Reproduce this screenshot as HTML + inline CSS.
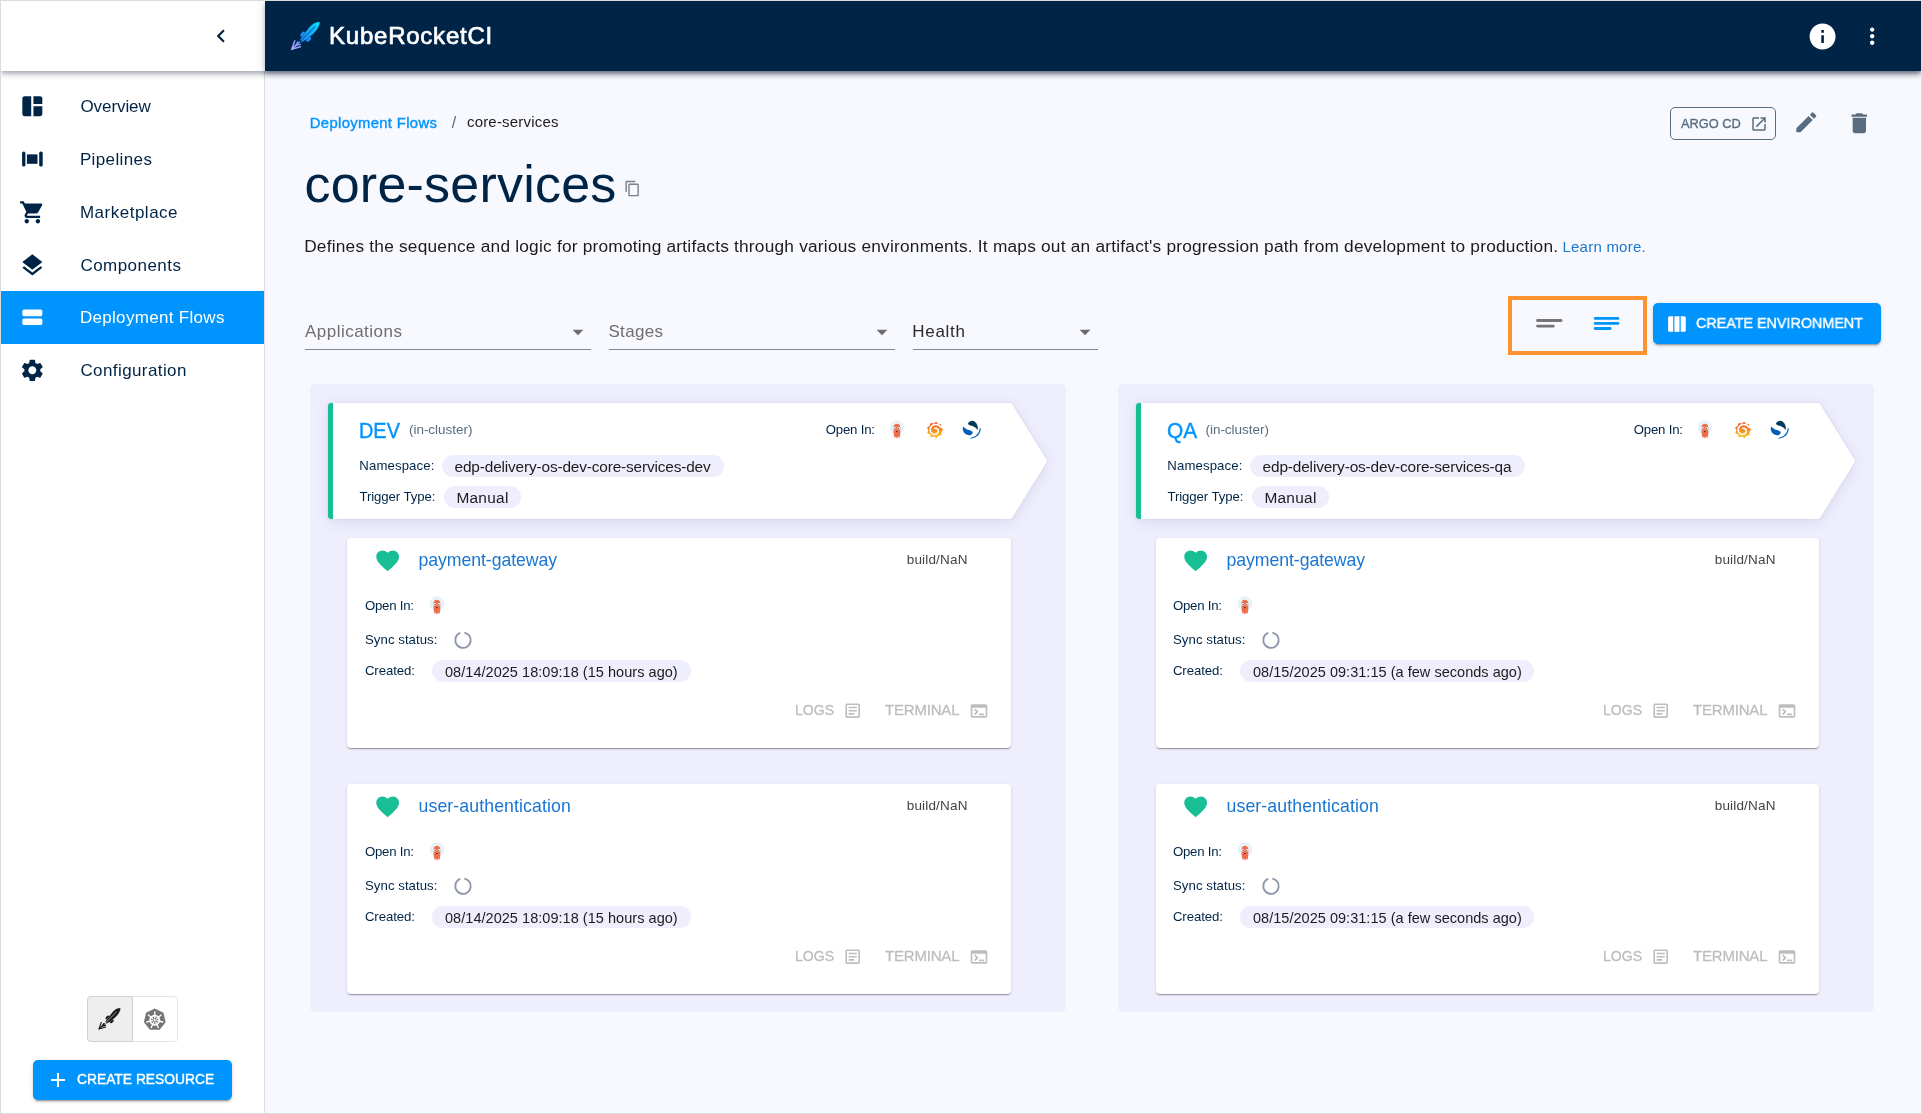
<!DOCTYPE html>
<html lang="en"><head><meta charset="utf-8"><title>core-services - Deployment Flows - KubeRocketCI</title>
<style>
html,body{margin:0;padding:0}
body{width:1922px;height:1114px;position:relative;overflow:hidden;background:#f8f9fe;font-family:"Liberation Sans",Arial,sans-serif}
.t{position:absolute;white-space:nowrap;line-height:normal;display:block}
.b{position:absolute;display:block}
#root{position:absolute;left:0;top:0;width:1922px;height:1114px;will-change:transform}
#frame{position:absolute;left:0;top:0;width:1920px;height:1112px;border:1px solid #dcdcdc;z-index:20;pointer-events:none}
</style></head><body>
<div id="root">
<div class="b" style="left:1px;top:1px;width:1920px;height:70px;background:#fff;box-shadow:0 2px 4px -1px rgba(0,20,50,.22),0 4px 5px 0 rgba(0,20,50,.15),0 1px 10px 0 rgba(0,20,50,.13);z-index:5"></div>
<div class="b" style="left:265px;top:1px;width:1656px;height:70px;background:#002446;z-index:6;box-shadow:0 2px 4px -1px rgba(0,20,50,.22),0 4px 5px 0 rgba(0,20,50,.15),0 1px 10px 0 rgba(0,20,50,.13)"></div>
<div style="position:absolute;left:0;top:0;z-index:7">
<svg class="b" style="left:208.30px;top:23.20px" width="26" height="26" viewBox="0 0 24 24" fill="#002446"><path d="M15.41 7.41L14 6l-6 6 6 6 1.41-1.41L10.83 12z"/></svg>
<svg class="b" style="left:284.00px;top:14.00px" width="48.00" height="44.00" viewBox="0 0 48 44"><defs><linearGradient id="rkb" gradientUnits="userSpaceOnUse" x1="35.800" y1="7.900" x2="16.500" y2="27"><stop offset="0" stop-color="#00e1ff"/><stop offset=".45" stop-color="#0fb4ff"/><stop offset="1" stop-color="#1e8bff"/></linearGradient><linearGradient id="rkf" gradientUnits="userSpaceOnUse" x1="17" y1="27" x2="7.500" y2="35.600"><stop offset="0" stop-color="#5a9cff"/><stop offset="1" stop-color="#c4a6ff"/></linearGradient></defs><ellipse cx="18.800" cy="20.100" rx="3" ry="1.700" transform="rotate(-45 18.800 20.100)" fill="#1b93ff"/><ellipse cx="24.600" cy="25.300" rx="3" ry="1.700" transform="rotate(-45 24.600 25.300)" fill="#1b93ff"/><path d="M35.90 7.80C32.20 7.50 28.30 9.60 25.20 13.30L16.00 25.40L17.50 28.40L22.20 25.80C27.00 22.20 31.00 18.80 33.10 15.60C35.10 12.60 36.00 9.90 35.90 7.80z" fill="url(#rkb)" stroke="#002446" stroke-width=".350"/><path d="M31 12.500L16.700 27" stroke="#043366" stroke-width=".900" fill="none"/><g fill="none" stroke="url(#rkf)" stroke-width="1.500" stroke-linejoin="miter" stroke-linecap="butt"><path d="M10.900 26.300L7.900 35.200l9.200-2.700"/><path d="M14.100 27.600l-2.300 4 5.200-1.500"/><path d="M15.800 27.800L8.500 34.700"/></g></svg>
<span class="t " style="left:329.03px;top:22.00px;font-size:24px;color:#fff;letter-spacing:0.767px;-webkit-text-stroke:0.7px #fff;">KubeRocketCI</span>
<svg class="b" style="left:1806.70px;top:20.70px" width="31.2" height="31.2" viewBox="0 0 24 24" fill="#fff"><path d="M12 2C6.48 2 2 6.48 2 12s4.48 10 10 10 10-4.48 10-10S17.52 2 12 2zm1 15h-2v-6h2v6zm0-8h-2V7h2v2z"/></svg>
<svg class="b" style="left:1859.00px;top:23.10px" width="26.4" height="26.4" viewBox="0 0 24 24" fill="#fff"><path d="M12 8c1.1 0 2-.9 2-2s-.9-2-2-2-2 .9-2 2 .9 2 2 2zm0 2c-1.1 0-2 .9-2 2s.9 2 2 2 2-.9 2-2-.9-2-2-2zm0 6c-1.1 0-2 .9-2 2s.9 2 2 2 2-.9 2-2-.9-2-2-2z"/></svg>
</div>
<div class="b" style="left:1px;top:71px;width:263px;height:1042px;background:#fff;border-right:1px solid #dedede"></div>
<div class="b" style="left:1px;top:290.8px;width:263px;height:52.9px;background:#0094ff"></div>
<svg class="b" style="left:18.66px;top:92.66px" width="26.67" height="26.67" viewBox="0 0 24 24" fill="#002446"><path d="M11 21H5c-1.1 0-2-.9-2-2V5c0-1.1.9-2 2-2h6v18zm2 0h6c1.1 0 2-.9 2-2v-7h-8v9zm8-11V5c0-1.1-.9-2-2-2h-6v7h8z"/></svg>
<span class="t " style="left:80.49px;top:97.00px;font-size:17px;color:#002446;letter-spacing:-0.084px;">Overview</span>
<span class="t " style="left:79.91px;top:150.00px;font-size:17px;color:#002446;letter-spacing:0.377px;">Pipelines</span>
<svg class="b" style="left:18.66px;top:198.66px" width="26.67" height="26.67" viewBox="0 0 24 24" fill="#002446"><path d="M7 18c-1.1 0-1.99.9-1.99 2S5.9 22 7 22s2-.9 2-2-.9-2-2-2zM1 2v2h2l3.6 7.59-1.35 2.45c-.16.28-.25.61-.25.96 0 1.1.9 2 2 2h12v-2H7.42c-.14 0-.25-.11-.25-.25l.03-.12.9-1.63h7.45c.75 0 1.41-.41 1.75-1.03l3.58-6.49c.08-.14.12-.31.12-.48 0-.55-.45-1-1-1H5.21l-.94-2H1zm16 16c-1.1 0-1.99.9-1.99 2s.89 2 1.99 2 2-.9 2-2-.9-2-2-2z"/></svg>
<span class="t " style="left:79.91px;top:203.00px;font-size:17px;color:#002446;letter-spacing:0.505px;">Marketplace</span>
<svg class="b" style="left:18.66px;top:251.66px" width="26.67" height="26.67" viewBox="0 0 24 24" fill="#002446"><path d="M11.99 18.54l-7.37-5.73L3 14.07l9 7 9-7-1.63-1.27-7.38 5.74zM12 16l7.36-5.73L21 9l-9-7-9 7 1.63 1.27L12 16z"/></svg>
<span class="t " style="left:80.44px;top:256.00px;font-size:17px;color:#002446;letter-spacing:0.454px;">Components</span>
<span class="t " style="left:79.91px;top:308.00px;font-size:17px;color:#fff;letter-spacing:0.312px;">Deployment Flows</span>
<svg class="b" style="left:18.66px;top:356.67px" width="26.67" height="26.67" viewBox="0 0 24 24" fill="#002446"><path d="M19.14 12.94c.04-.3.06-.61.06-.94 0-.32-.02-.64-.07-.94l2.03-1.58c.18-.14.23-.41.12-.61l-1.92-3.32c-.12-.22-.37-.29-.59-.22l-2.39.96c-.5-.38-1.03-.7-1.62-.94l-.36-2.54c-.04-.24-.24-.41-.48-.41h-3.84c-.24 0-.43.17-.47.41l-.36 2.54c-.59.24-1.13.57-1.62.94l-2.39-.96c-.22-.08-.47 0-.59.22L2.74 8.87c-.12.21-.08.47.12.61l2.03 1.58c-.05.3-.09.63-.09.94s.02.64.07.94l-2.03 1.58c-.18.14-.23.41-.12.61l1.92 3.32c.12.22.37.29.59.22l2.39-.96c.5.38 1.03.7 1.62.94l.36 2.54c.05.24.24.41.48.41h3.84c.24 0 .44-.17.47-.41l.36-2.54c.59-.24 1.13-.56 1.62-.94l2.39.96c.22.08.47 0 .59-.22l1.92-3.32c.12-.22.07-.47-.12-.61l-2.01-1.58zM12 15.6c-1.98 0-3.6-1.62-3.6-3.6s1.62-3.6 3.6-3.6 3.6 1.62 3.6 3.6-1.62 3.6-3.6 3.6z"/></svg>
<span class="t " style="left:80.44px;top:361.00px;font-size:17px;color:#002446;letter-spacing:0.404px;">Configuration</span>
<svg class="b" style="left:20px;top:148px" width="26" height="22" viewBox="0 0 26 22" fill="#002446"><rect x="2.100" y="3.600" width="3.300" height="15" rx="1.600"/><rect x="6.900" y="6.400" width="10.600" height="9.400"/><rect x="19.200" y="3.600" width="3.500" height="15" rx="1.600"/></svg>
<svg class="b" style="left:18.66px;top:303.97px" width="26.67" height="26.67" viewBox="0 0 24 24" fill="#fff"><rect x="3" y="5" width="18" height="6" rx="1.500"/><rect x="3" y="13" width="18" height="6" rx="1.500"/></svg>
<div class="b" style="left:87px;top:996px;width:91px;height:46px;border:1px solid #e4e4e4;border-radius:4px;box-sizing:border-box;background:#fff"></div>
<div class="b" style="left:87px;top:996px;width:46px;height:46px;background:#eeeeee;border:1px solid #d2d2d2;border-radius:4px 0 0 4px;box-sizing:border-box"></div>
<svg class="b" style="left:93.25px;top:1002.40px" width="36.82" height="33.75" viewBox="0 0 48 44"><ellipse cx="18.800" cy="20.100" rx="3" ry="1.700" transform="rotate(-45 18.800 20.100)" fill="#161616"/><ellipse cx="24.600" cy="25.300" rx="3" ry="1.700" transform="rotate(-45 24.600 25.300)" fill="#161616"/><path d="M35.90 7.80C32.20 7.50 28.30 9.60 25.20 13.30L16.00 25.40L17.50 28.40L22.20 25.80C27.00 22.20 31.00 18.80 33.10 15.60C35.10 12.60 36.00 9.90 35.90 7.80z" fill="#161616" stroke="#ededed" stroke-width=".350"/><path d="M31 12.500L16.700 27" stroke="#ededed" stroke-width=".900" fill="none"/><g fill="none" stroke="#161616" stroke-width="1.500" stroke-linejoin="miter" stroke-linecap="butt"><path d="M10.900 26.300L7.900 35.200l9.200-2.700"/><path d="M14.100 27.600l-2.300 4 5.200-1.500"/><path d="M15.800 27.800L8.500 34.700"/></g></svg>
<svg class="b" style="left:141.85px;top:1006.70px" width="25.5" height="25.5" viewBox="0 0 24 24" fill="none"><path fill="#757575" d="M12 1.500l8.200 3.950 2.030 8.870-5.680 7.120H7.450L1.770 14.320 3.800 5.450z"/>
<g stroke="#fff" fill="none" stroke-linecap="round"><circle cx="12" cy="12.400" r="4.300" stroke-width="1.700"/><path stroke-width="1.250" d="M12.00 10.20L12.00 4.70M13.72 11.03L18.02 7.60M14.14 12.89L19.51 14.11M12.95 14.38L15.34 19.34M11.05 14.38L8.66 19.34M9.86 12.89L4.49 14.11M10.28 11.03L5.98 7.60"/></g><circle cx="12" cy="12.400" r="1" fill="#fff"/></svg>
<div class="b" style="left:33px;top:1060px;width:199px;height:40px;background:#0094ff;border-radius:5px;box-shadow:0 3px 1px -2px rgba(0,0,0,.2),0 2px 2px 0 rgba(0,0,0,.14),0 1px 5px 0 rgba(0,0,0,.12)"></div>
<svg class="b" style="left:46.00px;top:1068.00px" width="24" height="24" viewBox="0 0 24 24" fill="#fff"><path d="M19 13h-6v6h-2v-6H5v-2h6V5h2v6h6v2z"/></svg>
<span class="t " style="left:77.10px;top:1071.00px;font-size:14.9px;color:#fff;transform:scaleX(0.9282);transform-origin:0 0;-webkit-text-stroke:0.4px #fff;">CREATE RESOURCE</span>
<span class="t " style="left:309.79px;top:115.00px;font-size:14.8px;color:#0094ff;letter-spacing:0.361px;-webkit-text-stroke:0.4px #0094ff;">Deployment Flows</span>
<span class="t " style="left:451.80px;top:114.00px;font-size:16px;color:#5f6b78;">/</span>
<span class="t " style="left:466.96px;top:113.00px;font-size:15px;color:#1c1c1c;letter-spacing:0.191px;">core-services</span>
<span class="t " style="left:304.49px;top:154.00px;font-size:52px;color:#002446;letter-spacing:0.225px;">core-services</span>
<svg class="b" style="left:623.70px;top:179.90px" width="17" height="17" viewBox="0 0 24 24" fill="#7e7e86"><path d="M16 1H4c-1.1 0-2 .9-2 2v14h2V3h12V1zm3 4H8c-1.1 0-2 .9-2 2v14c0 1.1.9 2 2 2h11c1.1 0 2-.9 2-2V7c0-1.1-.9-2-2-2zm0 16H8V7h11v14z"/></svg>
<span class="t " style="left:304.18px;top:236.00px;font-size:17.3px;color:#1c1c1c;letter-spacing:0.218px;">Defines the sequence and logic for promoting artifacts through various environments. It maps out an artifact's progression path from development to production.</span>
<span class="t " style="left:1562.47px;top:238.00px;font-size:15px;color:#1976d2;letter-spacing:0.232px;">Learn more.</span>
<div class="b" style="left:1670px;top:107px;width:106px;height:33px;border:1px solid #596d80;border-radius:5px;box-sizing:border-box"></div>
<span class="t " style="left:1680.97px;top:116.00px;font-size:13.7px;color:#596d80;transform:scaleX(0.9375);transform-origin:0 0;-webkit-text-stroke:0.35px #596d80;">ARGO CD</span>
<svg class="b" style="left:1750.10px;top:114.60px" width="18" height="18" viewBox="0 0 24 24" fill="#596d80"><path d="M19 19H5V5h7V3H5c-1.11 0-2 .9-2 2v14c0 1.1.89 2 2 2h14c1.1 0 2-.9 2-2v-7h-2v7zM14 3v2h3.59l-9.83 9.83 1.41 1.41L19 6.41V10h2V3h-7z"/></svg>
<svg class="b" style="left:1793.46px;top:109.47px" width="26.67" height="26.67" viewBox="0 0 24 24" fill="#596d80"><path d="M3 17.25V21h3.75L17.81 9.94l-3.75-3.75L3 17.25zM20.71 7.04c.39-.39.39-1.02 0-1.41l-2.34-2.34c-.39-.39-1.02-.39-1.41 0l-1.83 1.83 3.75 3.75 1.83-1.83z"/></svg>
<svg class="b" style="left:1845.91px;top:109.66px" width="26.67" height="26.67" viewBox="0 0 24 24" fill="#596d80"><path d="M6 19c0 1.1.9 2 2 2h8c1.1 0 2-.9 2-2V7H6v12zM19 4h-3.5l-1-1h-5l-1 1H5v2h14V4z"/></svg>
<span class="t " style="left:305.07px;top:322.00px;font-size:17px;color:#6e6e6e;letter-spacing:0.471px;">Applications</span>
<div class="b" style="left:305px;top:349px;width:286px;height:1px;background:#85858c"></div>
<svg class="b" style="left:565.30px;top:319.10px" width="26" height="26" viewBox="0 0 24 24" fill="#6b6b6b"><path d="M7 10l5 5 5-5z"/></svg>
<span class="t " style="left:608.43px;top:322.00px;font-size:17px;color:#6e6e6e;letter-spacing:0.332px;">Stages</span>
<div class="b" style="left:609px;top:349px;width:286px;height:1px;background:#85858c"></div>
<svg class="b" style="left:869.30px;top:319.10px" width="26" height="26" viewBox="0 0 24 24" fill="#6b6b6b"><path d="M7 10l5 5 5-5z"/></svg>
<span class="t " style="left:912.31px;top:322.00px;font-size:17px;color:#2b2b2b;letter-spacing:0.711px;">Health</span>
<div class="b" style="left:913px;top:349px;width:185px;height:1px;background:#85858c"></div>
<svg class="b" style="left:1072.30px;top:319.10px" width="26" height="26" viewBox="0 0 24 24" fill="#6b6b6b"><path d="M7 10l5 5 5-5z"/></svg>
<div class="b" style="left:1508px;top:296px;width:139px;height:59px;border:4px solid #fd9330;box-sizing:border-box"></div>
<svg class="b" style="left:1530px;top:310px" width="100" height="26" viewBox="0 0 100 26"><g fill="#757575"><rect x="6.100" y="9.100" width="26.400" height="2.800" rx="1.400"/><rect x="6.100" y="14.700" width="18.600" height="2.700" rx="1.350"/></g><g fill="#0094ff"><rect x="63.750" y="7" width="25.600" height="2.800" rx="1.400"/><rect x="63.750" y="12.050" width="25.600" height="2.800" rx="1.400"/><rect x="63.750" y="17.100" width="17.800" height="2.800" rx="1.400"/></g></svg>
<div class="b" style="left:1653px;top:303px;width:228px;height:41px;background:#0094ff;border-radius:5px;box-shadow:0 3px 1px -2px rgba(0,0,0,.2),0 2px 2px 0 rgba(0,0,0,.14),0 1px 5px 0 rgba(0,0,0,.12)"></div>
<svg class="b" style="left:1666px;top:314px" width="22" height="20" viewBox="0 0 22 20" fill="#fff"><path d="M3.600 2.300h3.600v15.500H3.600a1.500 1.500 0 0 1-1.500-1.500V3.800a1.500 1.500 0 0 1 1.500-1.500z"/><rect x="8.400" y="2.300" width="5.100" height="15.500"/><path d="M14.700 2.300h3.600a1.500 1.500 0 0 1 1.500 1.500v12.500a1.500 1.500 0 0 1-1.500 1.500h-3.600z"/></svg>
<span class="t " style="left:1696.27px;top:315.00px;font-size:14.9px;color:#fff;transform:scaleX(0.9625);transform-origin:0 0;-webkit-text-stroke:0.4px #fff;">CREATE ENVIRONMENT</span>
<div class="b" style="left:310px;top:384px;width:756px;height:627.7px;background:#efeefd;border-radius:5px"></div>
<svg class="b" style="left:318px;top:393px;filter:drop-shadow(0 0 1px rgba(20,30,90,.10)) drop-shadow(0 3px 7px rgba(30,45,130,.10))" width="745" height="137" viewBox="0 0 745 137"><path d="M13 10H691.500q2 0 3 1.700L728.300 66.300q1 1.700 0 3.400L694.500 124.300q-1 1.700-3 1.700H13q-3 0-3-3V13q0-3 3-3z" fill="#fff"/><path d="M13 10h2v116h-2q-3 0-3-3V13q0-3 3-3z" fill="#18be94"/></svg>
<span class="t " style="left:358.77px;top:419.00px;font-size:21.4px;color:#0094ff;transform:scaleX(0.9299);transform-origin:0 0;-webkit-text-stroke:0.4px #0094ff;">DEV</span>
<span class="t " style="left:408.96px;top:422.00px;font-size:13.5px;color:#596d80;letter-spacing:-0.026px;">(in-cluster)</span>
<span class="t " style="left:825.77px;top:422.00px;font-size:13.2px;color:#002446;letter-spacing:-0.201px;">Open In:</span>
<svg class="b" style="left:885.10px;top:418.20px" width="24" height="24" viewBox="0 0 24 24" fill="none"><circle cx="11.900" cy="9.500" r="6.600" fill="#eaf5fb" stroke="#c9e2f1" stroke-width=".600"/>
<path d="M8.500 9.300c0-2.100 1.500-3.500 3.400-3.500s3.400 1.400 3.400 3.500v6.300c0 .5-.1 1-.3 1.400l-.5 3.100-1-1.700-.6 2.400-.9-2.200-.9 2.200-.6-2.400-1 1.700-.5-3.100c-.2-.4-.3-.9-.3-1.400z" fill="#ee6d4b"/>
<circle cx="9.900" cy="10.200" r="1.250" fill="#fff"/><circle cx="13.900" cy="10.200" r="1.250" fill="#fff"/><circle cx="10.100" cy="10.300" r=".600" fill="#2a2a2a"/><circle cx="13.700" cy="10.300" r=".600" fill="#2a2a2a"/>
<ellipse cx="11.800" cy="13.600" rx=".850" ry=".700" fill="#3a1f1a"/></svg>
<svg class="b" style="left:923.80px;top:419.30px" width="22" height="22" viewBox="0 0 24 24" fill="none"><defs><linearGradient id="gg" x1="0" y1="1" x2="0" y2="0"><stop offset="0" stop-color="#fcc419"/><stop offset=".5" stop-color="#f78d1e"/><stop offset="1" stop-color="#ee4a24"/></linearGradient></defs>
<path fill="url(#gg)" stroke="url(#gg)" stroke-width=".600" stroke-linejoin="round" d="M13.30 3.40L15.35 5.85L18.53 6.25L18.52 9.45L20.70 11.79L18.63 14.23L18.80 17.43L15.65 17.97L13.72 20.53L10.95 18.92L7.84 19.64L6.75 16.63L3.90 15.18L5.00 12.17L3.75 9.23L6.53 7.63L7.47 4.57L10.62 5.14z"/>
<path d="M11.76 10.35L12.06 10.20L12.40 10.11L12.77 10.07L13.15 10.09L13.54 10.17L13.92 10.32L14.29 10.54L14.63 10.82L14.93 11.16L15.18 11.56L15.38 12.00L15.50 12.49L15.55 13.00L15.51 13.53L15.40 14.06L15.19 14.58L14.90 15.07L14.53 15.53L14.08 15.93L13.56 16.27L12.98 16.53L12.36 16.70L11.70 16.77L11.02 16.74L10.34 16.61L9.68 16.37L9.04 16.02L8.46 15.57L7.94 15.02L7.50 14.39L7.16 13.69L6.93 12.93L6.81 12.12L6.81 11.29L6.95 10.46L7.21 9.65L7.60 8.87L8.11 8.15L8.74 7.50L9.47 6.94L10.29 6.50L11.18 6.18L12.13 6.00L13.10 5.96L14.09 6.08L15.06 6.34L15.99 6.76L16.87 7.32L17.65 8.01L18.34 8.83" fill="none" stroke="#fff" stroke-width="1.800" stroke-linecap="round"/></svg>
<svg class="b" style="left:960.00px;top:418.00px" width="24" height="24" viewBox="0 0 24 24" fill="none"><path fill="#003b5c" d="M8 5.600C8.300 4.200 9.600 3.200 11.500 2.900c2.500-.300 4.700 1.600 5.700 4.100.700 1.800.800 3.800.300 5.300-.500-1.300-1.200-2.100-2.300-2.900-1.600-1.100-3.600-1.600-5.300-2.100C8.800 7 8 6.400 8 5.600z"/>
<path fill="#005eb8" d="M3.200 8.600c-.600 1.400-.600 3 0 4.400 1 2.400 3.200 4 5.800 4.200 1.600.100 3-.600 3.600-2 .300-.900-.100-1.700-1-2.200-1.600-.700-3.600-1-5.400-2-1.300-.700-2.300-1.500-3-2.400z"/>
<path fill="#005eb8" d="M20.600 9.800c.300 2.200-.200 4.400-1.600 6.400-2 2.800-5.500 4.400-9.100 4.400l.300-.700c3-.500 5.800-1.900 7.600-4.400 1.200-1.700 1.800-3.600 1.950-5.500z"/></svg>
<span class="t " style="left:359.32px;top:458.00px;font-size:13.2px;color:#002446;letter-spacing:0.109px;">Namespace:</span>
<div class="b" style="left:442px;top:455px;width:282.2px;height:22px;background:#efeefd;border-radius:11.0px"></div>
<span class="t " style="left:454.55px;top:458.00px;font-size:15.4px;color:#1c1c1c;letter-spacing:-0.155px;">edp-delivery-os-dev-core-services-dev</span>
<span class="t " style="left:359.40px;top:489.00px;font-size:13.2px;color:#002446;letter-spacing:-0.070px;">Trigger Type:</span>
<div class="b" style="left:444px;top:486px;width:77px;height:22px;background:#efeefd;border-radius:11.0px"></div>
<span class="t " style="left:456.44px;top:489.00px;font-size:15.4px;color:#1c1c1c;letter-spacing:0.277px;">Manual</span>
<div class="b" style="left:347px;top:538px;width:664px;height:210px;background:#fff;border-radius:4px;box-shadow:0 2px 1px -1px rgba(0,0,0,.2),0 1px 1px 0 rgba(0,0,0,.14),0 1px 3px 0 rgba(0,0,0,.12)"></div>
<svg class="b" style="left:374.15px;top:546.95px" width="27.3" height="27.3" viewBox="0 0 24 24" fill="#18be94"><path d="M12 21.35l-1.45-1.32C5.4 15.36 2 12.28 2 8.5 2 5.42 4.42 3 7.5 3c1.74 0 3.41.81 4.5 2.09C13.09 3.81 14.76 3 16.5 3 19.58 3 22 5.42 22 8.5c0 3.78-3.4 6.86-8.55 11.54L12 21.35z"/></svg>
<span class="t " style="left:418.56px;top:550.00px;font-size:17.7px;color:#1976d2;letter-spacing:-0.074px;">payment-gateway</span>
<span class="t " style="left:906.73px;top:552.00px;font-size:13.5px;color:#444;letter-spacing:0.174px;">build/NaN</span>
<span class="t " style="left:364.97px;top:598.00px;font-size:13.2px;color:#002446;letter-spacing:-0.229px;">Open In:</span>
<svg class="b" style="left:425.20px;top:593.80px" width="24" height="24" viewBox="0 0 24 24" fill="none"><circle cx="11.900" cy="9.500" r="6.600" fill="#eaf5fb" stroke="#c9e2f1" stroke-width=".600"/>
<path d="M8.500 9.300c0-2.100 1.500-3.500 3.400-3.500s3.400 1.400 3.400 3.500v6.300c0 .5-.1 1-.3 1.400l-.5 3.100-1-1.700-.6 2.400-.9-2.200-.9 2.200-.6-2.400-1 1.700-.5-3.100c-.2-.4-.3-.9-.3-1.400z" fill="#ee6d4b"/>
<circle cx="9.900" cy="10.200" r="1.250" fill="#fff"/><circle cx="13.900" cy="10.200" r="1.250" fill="#fff"/><circle cx="10.100" cy="10.300" r=".600" fill="#2a2a2a"/><circle cx="13.700" cy="10.300" r=".600" fill="#2a2a2a"/>
<ellipse cx="11.800" cy="13.600" rx=".850" ry=".700" fill="#3a1f1a"/></svg>
<span class="t " style="left:365.00px;top:632.00px;font-size:13.2px;color:#002446;letter-spacing:0.055px;">Sync status:</span>
<svg class="b" style="left:453px;top:630px" width="20" height="20" viewBox="0 0 20 20"><circle cx="10" cy="10.200" r="7.700" fill="none" stroke="#8f97aa" stroke-width="1.900" stroke-dasharray="44 4.400" transform="rotate(-80 10 10.200)"/></svg>
<span class="t " style="left:364.93px;top:663.00px;font-size:13.2px;color:#002446;letter-spacing:-0.079px;">Created:</span>
<div class="b" style="left:432px;top:660px;width:258.5px;height:22px;background:#efeefd;border-radius:11.0px"></div>
<span class="t " style="left:445.03px;top:664.00px;font-size:14.5px;color:#1c1c1c;letter-spacing:0.039px;">08/14/2025 18:09:18 (15 hours ago)</span>
<span class="t " style="left:795.44px;top:701.00px;font-size:15px;color:#bdbdbd;transform:scaleX(0.9406);transform-origin:0 0;-webkit-text-stroke:0.3px #bdbdbd;">LOGS</span>
<svg class="b" style="left:843.20px;top:700.90px" width="19.4" height="19.4" viewBox="0 0 24 24" fill="#bdbdbd"><path d="M19 5v14H5V5h14m0-2H5c-1.1 0-2 .9-2 2v14c0 1.1.9 2 2 2h14c1.1 0 2-.9 2-2V5c0-1.1-.9-2-2-2zM14 17H7v-2h7v2zm3-4H7v-2h10v2zm0-4H7V7h10v2z"/></svg>
<span class="t " style="left:885.06px;top:701.00px;font-size:15px;color:#bdbdbd;letter-spacing:-0.201px;-webkit-text-stroke:0.3px #bdbdbd;">TERMINAL</span>
<svg class="b" style="left:969.20px;top:700.60px" width="20" height="20" viewBox="0 0 24 24" fill="#bdbdbd"><path d="M20 4H4c-1.11 0-2 .9-2 2v12c0 1.1.89 2 2 2h16c1.1 0 2-.9 2-2V6c0-1.1-.9-2-2-2zm0 14H4V8h16v10zm-2-1h-6v-2h6v2zM7.5 17l-1.41-1.41L8.67 13l-2.59-2.59L7.5 9l4 4-4 4z"/></svg>
<div class="b" style="left:347px;top:784px;width:664px;height:210px;background:#fff;border-radius:4px;box-shadow:0 2px 1px -1px rgba(0,0,0,.2),0 1px 1px 0 rgba(0,0,0,.14),0 1px 3px 0 rgba(0,0,0,.12)"></div>
<svg class="b" style="left:374.15px;top:792.95px" width="27.3" height="27.3" viewBox="0 0 24 24" fill="#18be94"><path d="M12 21.35l-1.45-1.32C5.4 15.36 2 12.28 2 8.5 2 5.42 4.42 3 7.5 3c1.74 0 3.41.81 4.5 2.09C13.09 3.81 14.76 3 16.5 3 19.58 3 22 5.42 22 8.5c0 3.78-3.4 6.86-8.55 11.54L12 21.35z"/></svg>
<span class="t " style="left:418.55px;top:796.00px;font-size:17.7px;color:#1976d2;letter-spacing:0.097px;">user-authentication</span>
<span class="t " style="left:906.73px;top:798.00px;font-size:13.5px;color:#444;letter-spacing:0.174px;">build/NaN</span>
<span class="t " style="left:364.97px;top:844.00px;font-size:13.2px;color:#002446;letter-spacing:-0.229px;">Open In:</span>
<svg class="b" style="left:425.20px;top:839.80px" width="24" height="24" viewBox="0 0 24 24" fill="none"><circle cx="11.900" cy="9.500" r="6.600" fill="#eaf5fb" stroke="#c9e2f1" stroke-width=".600"/>
<path d="M8.500 9.300c0-2.100 1.500-3.500 3.400-3.500s3.400 1.400 3.400 3.500v6.300c0 .5-.1 1-.3 1.400l-.5 3.100-1-1.700-.6 2.400-.9-2.200-.9 2.200-.6-2.400-1 1.700-.5-3.100c-.2-.4-.3-.9-.3-1.400z" fill="#ee6d4b"/>
<circle cx="9.900" cy="10.200" r="1.250" fill="#fff"/><circle cx="13.900" cy="10.200" r="1.250" fill="#fff"/><circle cx="10.100" cy="10.300" r=".600" fill="#2a2a2a"/><circle cx="13.700" cy="10.300" r=".600" fill="#2a2a2a"/>
<ellipse cx="11.800" cy="13.600" rx=".850" ry=".700" fill="#3a1f1a"/></svg>
<span class="t " style="left:365.00px;top:878.00px;font-size:13.2px;color:#002446;letter-spacing:0.055px;">Sync status:</span>
<svg class="b" style="left:453px;top:876px" width="20" height="20" viewBox="0 0 20 20"><circle cx="10" cy="10.200" r="7.700" fill="none" stroke="#8f97aa" stroke-width="1.900" stroke-dasharray="44 4.400" transform="rotate(-80 10 10.200)"/></svg>
<span class="t " style="left:364.93px;top:909.00px;font-size:13.2px;color:#002446;letter-spacing:-0.079px;">Created:</span>
<div class="b" style="left:432px;top:906px;width:258.5px;height:22px;background:#efeefd;border-radius:11.0px"></div>
<span class="t " style="left:445.03px;top:910.00px;font-size:14.5px;color:#1c1c1c;letter-spacing:0.039px;">08/14/2025 18:09:18 (15 hours ago)</span>
<span class="t " style="left:795.44px;top:947.00px;font-size:15px;color:#bdbdbd;transform:scaleX(0.9406);transform-origin:0 0;-webkit-text-stroke:0.3px #bdbdbd;">LOGS</span>
<svg class="b" style="left:843.20px;top:946.90px" width="19.4" height="19.4" viewBox="0 0 24 24" fill="#bdbdbd"><path d="M19 5v14H5V5h14m0-2H5c-1.1 0-2 .9-2 2v14c0 1.1.9 2 2 2h14c1.1 0 2-.9 2-2V5c0-1.1-.9-2-2-2zM14 17H7v-2h7v2zm3-4H7v-2h10v2zm0-4H7V7h10v2z"/></svg>
<span class="t " style="left:885.06px;top:947.00px;font-size:15px;color:#bdbdbd;letter-spacing:-0.201px;-webkit-text-stroke:0.3px #bdbdbd;">TERMINAL</span>
<svg class="b" style="left:969.20px;top:946.60px" width="20" height="20" viewBox="0 0 24 24" fill="#bdbdbd"><path d="M20 4H4c-1.11 0-2 .9-2 2v12c0 1.1.89 2 2 2h16c1.1 0 2-.9 2-2V6c0-1.1-.9-2-2-2zm0 14H4V8h16v10zm-2-1h-6v-2h6v2zM7.5 17l-1.41-1.41L8.67 13l-2.59-2.59L7.5 9l4 4-4 4z"/></svg>
<div class="b" style="left:1118px;top:384px;width:756px;height:627.7px;background:#efeefd;border-radius:5px"></div>
<svg class="b" style="left:1126px;top:393px;filter:drop-shadow(0 0 1px rgba(20,30,90,.10)) drop-shadow(0 3px 7px rgba(30,45,130,.10))" width="745" height="137" viewBox="0 0 745 137"><path d="M13 10H691.500q2 0 3 1.700L728.300 66.300q1 1.700 0 3.400L694.500 124.300q-1 1.700-3 1.700H13q-3 0-3-3V13q0-3 3-3z" fill="#fff"/><path d="M13 10h2v116h-2q-3 0-3-3V13q0-3 3-3z" fill="#18be94"/></svg>
<span class="t " style="left:1167.01px;top:419.00px;font-size:21.4px;color:#0094ff;transform:scaleX(0.9778);transform-origin:0 0;-webkit-text-stroke:0.4px #0094ff;">QA</span>
<span class="t " style="left:1205.46px;top:422.00px;font-size:13.5px;color:#596d80;letter-spacing:-0.026px;">(in-cluster)</span>
<span class="t " style="left:1633.77px;top:422.00px;font-size:13.2px;color:#002446;letter-spacing:-0.201px;">Open In:</span>
<svg class="b" style="left:1693.10px;top:418.20px" width="24" height="24" viewBox="0 0 24 24" fill="none"><circle cx="11.900" cy="9.500" r="6.600" fill="#eaf5fb" stroke="#c9e2f1" stroke-width=".600"/>
<path d="M8.500 9.300c0-2.100 1.500-3.500 3.400-3.500s3.400 1.400 3.400 3.500v6.300c0 .5-.1 1-.3 1.400l-.5 3.100-1-1.700-.6 2.400-.9-2.200-.9 2.200-.6-2.400-1 1.700-.5-3.100c-.2-.4-.3-.9-.3-1.400z" fill="#ee6d4b"/>
<circle cx="9.900" cy="10.200" r="1.250" fill="#fff"/><circle cx="13.900" cy="10.200" r="1.250" fill="#fff"/><circle cx="10.100" cy="10.300" r=".600" fill="#2a2a2a"/><circle cx="13.700" cy="10.300" r=".600" fill="#2a2a2a"/>
<ellipse cx="11.800" cy="13.600" rx=".850" ry=".700" fill="#3a1f1a"/></svg>
<svg class="b" style="left:1731.80px;top:419.30px" width="22" height="22" viewBox="0 0 24 24" fill="none"><defs><linearGradient id="gg" x1="0" y1="1" x2="0" y2="0"><stop offset="0" stop-color="#fcc419"/><stop offset=".5" stop-color="#f78d1e"/><stop offset="1" stop-color="#ee4a24"/></linearGradient></defs>
<path fill="url(#gg)" stroke="url(#gg)" stroke-width=".600" stroke-linejoin="round" d="M13.30 3.40L15.35 5.85L18.53 6.25L18.52 9.45L20.70 11.79L18.63 14.23L18.80 17.43L15.65 17.97L13.72 20.53L10.95 18.92L7.84 19.64L6.75 16.63L3.90 15.18L5.00 12.17L3.75 9.23L6.53 7.63L7.47 4.57L10.62 5.14z"/>
<path d="M11.76 10.35L12.06 10.20L12.40 10.11L12.77 10.07L13.15 10.09L13.54 10.17L13.92 10.32L14.29 10.54L14.63 10.82L14.93 11.16L15.18 11.56L15.38 12.00L15.50 12.49L15.55 13.00L15.51 13.53L15.40 14.06L15.19 14.58L14.90 15.07L14.53 15.53L14.08 15.93L13.56 16.27L12.98 16.53L12.36 16.70L11.70 16.77L11.02 16.74L10.34 16.61L9.68 16.37L9.04 16.02L8.46 15.57L7.94 15.02L7.50 14.39L7.16 13.69L6.93 12.93L6.81 12.12L6.81 11.29L6.95 10.46L7.21 9.65L7.60 8.87L8.11 8.15L8.74 7.50L9.47 6.94L10.29 6.50L11.18 6.18L12.13 6.00L13.10 5.96L14.09 6.08L15.06 6.34L15.99 6.76L16.87 7.32L17.65 8.01L18.34 8.83" fill="none" stroke="#fff" stroke-width="1.800" stroke-linecap="round"/></svg>
<svg class="b" style="left:1768.00px;top:418.00px" width="24" height="24" viewBox="0 0 24 24" fill="none"><path fill="#003b5c" d="M8 5.600C8.300 4.200 9.600 3.200 11.500 2.900c2.500-.300 4.700 1.600 5.700 4.100.700 1.800.800 3.800.300 5.300-.500-1.300-1.200-2.100-2.300-2.900-1.600-1.100-3.600-1.600-5.300-2.100C8.800 7 8 6.400 8 5.600z"/>
<path fill="#005eb8" d="M3.200 8.600c-.600 1.400-.600 3 0 4.400 1 2.400 3.200 4 5.800 4.200 1.600.100 3-.600 3.600-2 .300-.900-.100-1.700-1-2.200-1.600-.700-3.600-1-5.400-2-1.300-.700-2.300-1.500-3-2.400z"/>
<path fill="#005eb8" d="M20.600 9.800c.300 2.200-.200 4.400-1.600 6.400-2 2.800-5.500 4.400-9.100 4.400l.300-.700c3-.500 5.800-1.900 7.600-4.400 1.200-1.700 1.800-3.600 1.950-5.500z"/></svg>
<span class="t " style="left:1167.32px;top:458.00px;font-size:13.2px;color:#002446;letter-spacing:0.109px;">Namespace:</span>
<div class="b" style="left:1250px;top:455px;width:275px;height:22px;background:#efeefd;border-radius:11.0px"></div>
<span class="t " style="left:1262.55px;top:458.00px;font-size:15.4px;color:#1c1c1c;letter-spacing:-0.144px;">edp-delivery-os-dev-core-services-qa</span>
<span class="t " style="left:1167.40px;top:489.00px;font-size:13.2px;color:#002446;letter-spacing:-0.070px;">Trigger Type:</span>
<div class="b" style="left:1252px;top:486px;width:77px;height:22px;background:#efeefd;border-radius:11.0px"></div>
<span class="t " style="left:1264.44px;top:489.00px;font-size:15.4px;color:#1c1c1c;letter-spacing:0.277px;">Manual</span>
<div class="b" style="left:1156px;top:538px;width:663px;height:210px;background:#fff;border-radius:4px;box-shadow:0 2px 1px -1px rgba(0,0,0,.2),0 1px 1px 0 rgba(0,0,0,.14),0 1px 3px 0 rgba(0,0,0,.12)"></div>
<svg class="b" style="left:1182.15px;top:546.95px" width="27.3" height="27.3" viewBox="0 0 24 24" fill="#18be94"><path d="M12 21.35l-1.45-1.32C5.4 15.36 2 12.28 2 8.5 2 5.42 4.42 3 7.5 3c1.74 0 3.41.81 4.5 2.09C13.09 3.81 14.76 3 16.5 3 19.58 3 22 5.42 22 8.5c0 3.78-3.4 6.86-8.55 11.54L12 21.35z"/></svg>
<span class="t " style="left:1226.56px;top:550.00px;font-size:17.7px;color:#1976d2;letter-spacing:-0.074px;">payment-gateway</span>
<span class="t " style="left:1714.73px;top:552.00px;font-size:13.5px;color:#444;letter-spacing:0.174px;">build/NaN</span>
<span class="t " style="left:1172.97px;top:598.00px;font-size:13.2px;color:#002446;letter-spacing:-0.229px;">Open In:</span>
<svg class="b" style="left:1233.20px;top:593.80px" width="24" height="24" viewBox="0 0 24 24" fill="none"><circle cx="11.900" cy="9.500" r="6.600" fill="#eaf5fb" stroke="#c9e2f1" stroke-width=".600"/>
<path d="M8.500 9.300c0-2.100 1.500-3.500 3.400-3.500s3.400 1.400 3.400 3.500v6.300c0 .5-.1 1-.3 1.400l-.5 3.100-1-1.700-.6 2.400-.9-2.200-.9 2.200-.6-2.400-1 1.700-.5-3.100c-.2-.4-.3-.9-.3-1.400z" fill="#ee6d4b"/>
<circle cx="9.900" cy="10.200" r="1.250" fill="#fff"/><circle cx="13.900" cy="10.200" r="1.250" fill="#fff"/><circle cx="10.100" cy="10.300" r=".600" fill="#2a2a2a"/><circle cx="13.700" cy="10.300" r=".600" fill="#2a2a2a"/>
<ellipse cx="11.800" cy="13.600" rx=".850" ry=".700" fill="#3a1f1a"/></svg>
<span class="t " style="left:1173.00px;top:632.00px;font-size:13.2px;color:#002446;letter-spacing:0.055px;">Sync status:</span>
<svg class="b" style="left:1261px;top:630px" width="20" height="20" viewBox="0 0 20 20"><circle cx="10" cy="10.200" r="7.700" fill="none" stroke="#8f97aa" stroke-width="1.900" stroke-dasharray="44 4.400" transform="rotate(-80 10 10.200)"/></svg>
<span class="t " style="left:1172.93px;top:663.00px;font-size:13.2px;color:#002446;letter-spacing:-0.079px;">Created:</span>
<div class="b" style="left:1240px;top:660px;width:294px;height:22px;background:#efeefd;border-radius:11.0px"></div>
<span class="t " style="left:1253.03px;top:664.00px;font-size:14.5px;color:#1c1c1c;letter-spacing:0.029px;">08/15/2025 09:31:15 (a few seconds ago)</span>
<span class="t " style="left:1603.44px;top:701.00px;font-size:15px;color:#bdbdbd;transform:scaleX(0.9406);transform-origin:0 0;-webkit-text-stroke:0.3px #bdbdbd;">LOGS</span>
<svg class="b" style="left:1651.20px;top:700.90px" width="19.4" height="19.4" viewBox="0 0 24 24" fill="#bdbdbd"><path d="M19 5v14H5V5h14m0-2H5c-1.1 0-2 .9-2 2v14c0 1.1.9 2 2 2h14c1.1 0 2-.9 2-2V5c0-1.1-.9-2-2-2zM14 17H7v-2h7v2zm3-4H7v-2h10v2zm0-4H7V7h10v2z"/></svg>
<span class="t " style="left:1693.06px;top:701.00px;font-size:15px;color:#bdbdbd;letter-spacing:-0.201px;-webkit-text-stroke:0.3px #bdbdbd;">TERMINAL</span>
<svg class="b" style="left:1777.20px;top:700.60px" width="20" height="20" viewBox="0 0 24 24" fill="#bdbdbd"><path d="M20 4H4c-1.11 0-2 .9-2 2v12c0 1.1.89 2 2 2h16c1.1 0 2-.9 2-2V6c0-1.1-.9-2-2-2zm0 14H4V8h16v10zm-2-1h-6v-2h6v2zM7.5 17l-1.41-1.41L8.67 13l-2.59-2.59L7.5 9l4 4-4 4z"/></svg>
<div class="b" style="left:1156px;top:784px;width:663px;height:210px;background:#fff;border-radius:4px;box-shadow:0 2px 1px -1px rgba(0,0,0,.2),0 1px 1px 0 rgba(0,0,0,.14),0 1px 3px 0 rgba(0,0,0,.12)"></div>
<svg class="b" style="left:1182.15px;top:792.95px" width="27.3" height="27.3" viewBox="0 0 24 24" fill="#18be94"><path d="M12 21.35l-1.45-1.32C5.4 15.36 2 12.28 2 8.5 2 5.42 4.42 3 7.5 3c1.74 0 3.41.81 4.5 2.09C13.09 3.81 14.76 3 16.5 3 19.58 3 22 5.42 22 8.5c0 3.78-3.4 6.86-8.55 11.54L12 21.35z"/></svg>
<span class="t " style="left:1226.55px;top:796.00px;font-size:17.7px;color:#1976d2;letter-spacing:0.097px;">user-authentication</span>
<span class="t " style="left:1714.73px;top:798.00px;font-size:13.5px;color:#444;letter-spacing:0.174px;">build/NaN</span>
<span class="t " style="left:1172.97px;top:844.00px;font-size:13.2px;color:#002446;letter-spacing:-0.229px;">Open In:</span>
<svg class="b" style="left:1233.20px;top:839.80px" width="24" height="24" viewBox="0 0 24 24" fill="none"><circle cx="11.900" cy="9.500" r="6.600" fill="#eaf5fb" stroke="#c9e2f1" stroke-width=".600"/>
<path d="M8.500 9.300c0-2.100 1.500-3.500 3.400-3.500s3.400 1.400 3.400 3.500v6.300c0 .5-.1 1-.3 1.400l-.5 3.100-1-1.700-.6 2.400-.9-2.200-.9 2.200-.6-2.400-1 1.700-.5-3.100c-.2-.4-.3-.9-.3-1.400z" fill="#ee6d4b"/>
<circle cx="9.900" cy="10.200" r="1.250" fill="#fff"/><circle cx="13.900" cy="10.200" r="1.250" fill="#fff"/><circle cx="10.100" cy="10.300" r=".600" fill="#2a2a2a"/><circle cx="13.700" cy="10.300" r=".600" fill="#2a2a2a"/>
<ellipse cx="11.800" cy="13.600" rx=".850" ry=".700" fill="#3a1f1a"/></svg>
<span class="t " style="left:1173.00px;top:878.00px;font-size:13.2px;color:#002446;letter-spacing:0.055px;">Sync status:</span>
<svg class="b" style="left:1261px;top:876px" width="20" height="20" viewBox="0 0 20 20"><circle cx="10" cy="10.200" r="7.700" fill="none" stroke="#8f97aa" stroke-width="1.900" stroke-dasharray="44 4.400" transform="rotate(-80 10 10.200)"/></svg>
<span class="t " style="left:1172.93px;top:909.00px;font-size:13.2px;color:#002446;letter-spacing:-0.079px;">Created:</span>
<div class="b" style="left:1240px;top:906px;width:294px;height:22px;background:#efeefd;border-radius:11.0px"></div>
<span class="t " style="left:1253.03px;top:910.00px;font-size:14.5px;color:#1c1c1c;letter-spacing:0.029px;">08/15/2025 09:31:15 (a few seconds ago)</span>
<span class="t " style="left:1603.44px;top:947.00px;font-size:15px;color:#bdbdbd;transform:scaleX(0.9406);transform-origin:0 0;-webkit-text-stroke:0.3px #bdbdbd;">LOGS</span>
<svg class="b" style="left:1651.20px;top:946.90px" width="19.4" height="19.4" viewBox="0 0 24 24" fill="#bdbdbd"><path d="M19 5v14H5V5h14m0-2H5c-1.1 0-2 .9-2 2v14c0 1.1.9 2 2 2h14c1.1 0 2-.9 2-2V5c0-1.1-.9-2-2-2zM14 17H7v-2h7v2zm3-4H7v-2h10v2zm0-4H7V7h10v2z"/></svg>
<span class="t " style="left:1693.06px;top:947.00px;font-size:15px;color:#bdbdbd;letter-spacing:-0.201px;-webkit-text-stroke:0.3px #bdbdbd;">TERMINAL</span>
<svg class="b" style="left:1777.20px;top:946.60px" width="20" height="20" viewBox="0 0 24 24" fill="#bdbdbd"><path d="M20 4H4c-1.11 0-2 .9-2 2v12c0 1.1.89 2 2 2h16c1.1 0 2-.9 2-2V6c0-1.1-.9-2-2-2zm0 14H4V8h16v10zm-2-1h-6v-2h6v2zM7.5 17l-1.41-1.41L8.67 13l-2.59-2.59L7.5 9l4 4-4 4z"/></svg>
<div id="frame"></div>
</div>
</body></html>
